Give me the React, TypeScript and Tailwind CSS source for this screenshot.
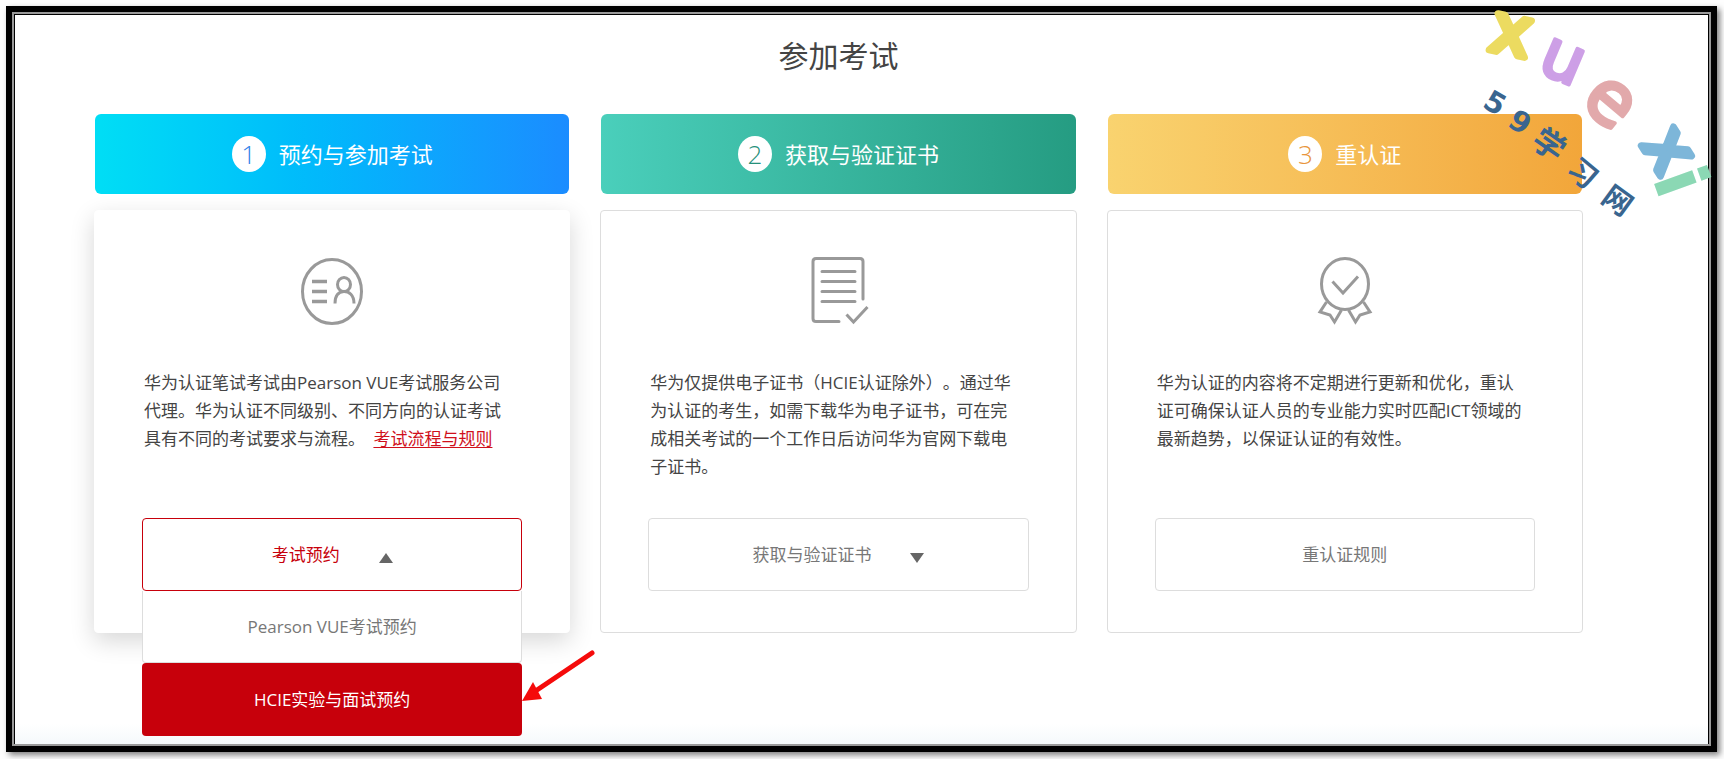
import { useState, type ReactNode } from "react";

const actionClass =
  "flex h-[73px] w-full cursor-pointer items-center justify-center gap-[39px] rounded border bg-white text-[17px]";

function Triangle({ up = false }: { up?: boolean }) {
  return (
    <svg width="14" height="10" viewBox="0 0 14 10" className="mt-1.5 fill-[#666]" aria-hidden="true">
      <path d={up ? "M7 0 14 10H0z" : "M0 0h14L7 10z"} />
    </svg>
  );
}

function IconFrame({ children }: { children: ReactNode }) {
  return (
    <svg
      width="68"
      height="68"
      viewBox="0 0 68 68"
      fill="none"
      stroke="#999"
      strokeWidth="3"
      className="mx-auto shrink-0"
      aria-hidden="true"
    >
      {children}
    </svg>
  );
}

function ExamIcon() {
  return (
    <IconFrame>
      <ellipse cx="34" cy="34.5" rx="29.5" ry="32" />
      <path d="M14 24.5h15M14 34.5h15M14 44.5h15" strokeWidth="3.5" />
      <ellipse cx="46" cy="27.5" rx="6.5" ry="7" />
      <path d="M37 46.5C37 38 41 34.5 46 34.5S56 38 56 46.5" />
    </IconFrame>
  );
}

function CertificateIcon() {
  return (
    <IconFrame>
      <path d="M35 64.5H12q-3 0-3-3V4.5q0-3 3-3h44q3 0 3 3V42" strokeLinecap="round" />
      <path d="M18 14.5h33M18 24.5h33M18 34.5h33M18 44.5h33" strokeLinecap="round" />
      <path d="M42.5 57.5 49.5 65 63.5 50" />
    </IconFrame>
  );
}

function MedalIcon() {
  return (
    <IconFrame>
      <ellipse cx="34" cy="27" rx="23.5" ry="25.5" />
      <path d="M21.5 24.5 32 36 47 19.5" />
      <path d="M15.5 45 9 55 19 58 23.5 65 30.5 53" />
      <path d="M52.5 45 59 55 49 58 44.5 65 37.5 53" />
    </IconFrame>
  );
}

type StepProps = {
  number: number;
  title: string;
  gradient: string;
  numberColor: string;
  cardStyle: string;
  icon: ReactNode;
  text: ReactNode;
  children: ReactNode;
};

function Step({ number, title, gradient, numberColor, cardStyle, icon, text, children }: StepProps) {
  return (
    <section>
      <h2
        className={`mx-px flex h-20 items-center justify-center gap-[13px] rounded-md bg-linear-to-r text-[22px] text-white ${gradient}`}
      >
        <span
          className={`flex h-9 w-[34px] items-center justify-center rounded-[50%] bg-white text-[26px] leading-9 font-light ${numberColor}`}
        >
          {number}
        </span>
        {title}
      </h2>
      <div className={`mt-4 flex flex-col rounded border bg-white px-[47px] pt-[46px] pb-[41px] ${cardStyle}`}>
        {icon}
        <p className="mt-11 min-h-28 pl-0.5 text-[17px] leading-7 whitespace-nowrap text-[#444] [text-spacing-trim:space-all]">
          {text}
        </p>
        <div className="relative mt-[37px]">{children}</div>
      </div>
    </section>
  );
}

function Watermark() {
  return (
    <svg
      width="260"
      height="230"
      viewBox="0 0 260 230"
      className="pointer-events-none absolute top-0 right-0 overflow-visible font-['DejaVu_Sans','Noto_Sans_CJK_SC',sans-serif]"
      textAnchor="middle"
      strokeLinejoin="round"
      aria-hidden="true"
    >
      <g fontSize="68" fontWeight="400" strokeWidth="7">
        <text fill="#ecdb60" stroke="#ecdb60" transform="translate(47 35) rotate(12)" y="19">x</text>
        <text fill="#cd9fe6" strokeWidth="4" fontSize="66" stroke="#cd9fe6" transform="translate(98 62) rotate(23)" y="18">u</text>
        <text fill="#e2a9ab" strokeWidth="4" fontSize="74" stroke="#e2a9ab" transform="translate(145 103) rotate(40)" y="20">e</text>
        <text fill="#7db6d9" stroke="#7db6d9" transform="translate(203 151) rotate(58)" y="19">x</text>
        <text fill="#8bd8b4" fontWeight="700" strokeWidth="0" fontSize="74" transform="translate(215 182) rotate(70)" y="24">i</text>
      </g>
      <g fontSize="29" fontWeight="700" fill="#39658f">
        <text transform="translate(31 103) rotate(30)" y="10">5</text>
        <text transform="translate(56 122) rotate(32)" y="10">9</text>
        <text fontSize="32" transform="translate(85 145) rotate(35)" y="11">学</text>
        <text transform="translate(119 173) rotate(40)" y="11">习</text>
        <text transform="translate(154 200) rotate(36)" y="11">网</text>
      </g>
    </svg>
  );
}

export default function App() {
  const [open, setOpen] = useState(true);

  return (
    <div className="relative bg-[#fefefe] pt-1.5 pr-[7px] pb-[7px] pl-1.5 font-['Open_Sans','Noto_Sans_CJK_SC',sans-serif]">
      <div className="border-6 border-black shadow-[3px_3px_6px_rgba(0,0,0,0.5)]">
        <div className="border-2 border-[#999]">
          <main className="border border-b-0 border-black bg-linear-to-t from-[#f5f9fb] to-white to-[20px] pt-[21px] pr-[125px] pb-[111px] pl-[79px]">
            <h1 className="text-center text-[30px] leading-10 text-[#444]">参加考试</h1>
            <div className="mt-[38px] grid grid-cols-3 gap-[30px]">
              <Step
                number={1}
                title="预约与参加考试"
                gradient="from-[#00def5] to-[#1b8cff]"
                numberColor="text-[#2f7fe8]"
                cardStyle="border-white shadow-[0_8px_24px_rgba(0,0,0,0.16)]"
                icon={<ExamIcon />}
                text={
                  <>
                    华为认证笔试考试由Pearson VUE考试服务公司
                    <br />
                    代理。华为认证不同级别、不同方向的认证考试
                    <br />
                    具有不同的考试要求与流程。{" "}
                    <a href="#rules" className="ml-1 text-[#d0101c] underline underline-offset-2">
                      考试流程与规则
                    </a>
                  </>
                }
              >
                <button
                  type="button"
                  aria-expanded={open}
                  onClick={() => setOpen(!open)}
                  className={`${actionClass} border-[#c7000b] text-[#c7000b]`}
                >
                  考试预约
                  <Triangle up={open} />
                </button>
                {open && (
                  <nav className="absolute inset-x-0 top-full z-10 text-[17px]">
                    <a
                      href="#pearson"
                      className="flex h-[72px] items-center justify-center rounded-b border border-t-0 border-[#ddd] bg-white text-[#777]"
                    >
                      Pearson VUE考试预约
                    </a>
                    <a
                      href="#hcie"
                      className="flex h-[73px] items-center justify-center rounded bg-[#c7000b] text-white"
                    >
                      HCIE实验与面试预约
                    </a>
                    <svg
                      width="76"
                      height="56"
                      viewBox="0 0 76 56"
                      className="absolute bottom-[32px] left-full"
                      aria-hidden="true"
                    >
                      <path d="M70 5 15 42" stroke="#f50b0b" strokeWidth="5" strokeLinecap="round" />
                      <path d="M0 53 11 34 20 51z" fill="#f50b0b" />
                    </svg>
                  </nav>
                )}
              </Step>
              <Step
                number={2}
                title="获取与验证证书"
                gradient="from-[#4acfbb] to-[#259c82]"
                numberColor="text-[#25907a]"
                cardStyle="border-[#ddd]"
                icon={<CertificateIcon />}
                text={
                  <>
                    华为仅提供电子证书（HCIE认证除外）。通过华
                    <br />
                    为认证的考生，如需下载华为电子证书，可在完
                    <br />
                    成相关考试的一个工作日后访问华为官网下载电
                    <br />
                    子证书。
                  </>
                }
              >
                <button type="button" className={`${actionClass} border-[#ddd] text-[#777]`}>
                  获取与验证证书
                  <Triangle />
                </button>
              </Step>
              <Step
                number={3}
                title="重认证"
                gradient="from-[#f9d36f] to-[#f2a63a]"
                numberColor="text-[#e8963c]"
                cardStyle="border-[#ddd]"
                icon={<MedalIcon />}
                text={
                  <>
                    华为认证的内容将不定期进行更新和优化，重认
                    <br />
                    证可确保认证人员的专业能力实时匹配ICT领域的
                    <br />
                    最新趋势，以保证认证的有效性。
                  </>
                }
              >
                <button type="button" className={`${actionClass} border-[#ddd] text-[#777]`}>
                  重认证规则
                </button>
              </Step>
            </div>
          </main>
        </div>
      </div>
      <Watermark />
    </div>
  );
}
